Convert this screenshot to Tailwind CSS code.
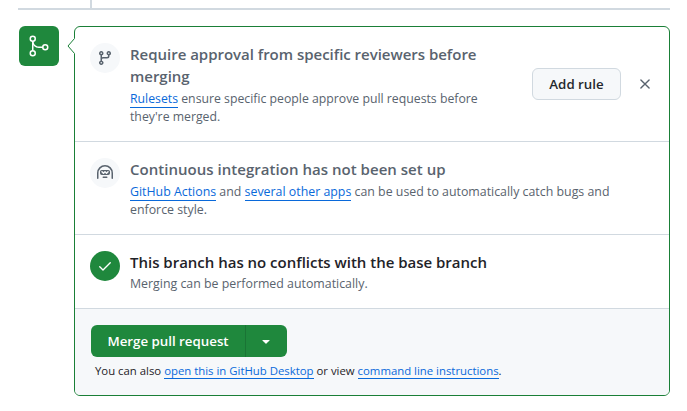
<!DOCTYPE html>
<html lang="en">
<head>
<meta charset="utf-8">
<title>Merge pull request</title>
<script src="https://cdn.jsdelivr.net/npm/@tailwindcss/browser@4"></script>
</head>
<body class="bg-white font-['Open_Sans','Noto_Sans',sans-serif] text-[#59636e]">
<main class="flex h-[411px] w-[687px] flex-col overflow-hidden">
  <div class="ml-[90px] h-2 w-0.5 bg-[#d1d9e0]"></div>
  <div class="ml-[18px] h-0.5 w-[652px] bg-[#d1d9e0]"></div>
  <div class="mt-4 ml-[19px] flex gap-[15px]">
    <div class="flex size-10 items-center justify-center rounded-md bg-[#1f883d] text-white">
      <svg class="size-6" viewBox="0 0 24 24" fill="currentColor"><path d="M15 13.25a3.25 3.25 0 1 1 6.5 0 3.25 3.25 0 0 1-6.5 0Zm-12.5 6a3.25 3.25 0 1 1 6.5 0 3.25 3.25 0 0 1-6.5 0Zm0-14.5a3.25 3.25 0 1 1 6.5 0 3.25 3.25 0 0 1-6.5 0ZM5.75 6.5a1.75 1.75 0 1 0-.001-3.501A1.75 1.75 0 0 0 5.75 6.5Zm0 14.5a1.75 1.75 0 1 0-.001-3.501A1.75 1.75 0 0 0 5.75 21Zm12.5-6a1.75 1.75 0 1 0-.001-3.501A1.75 1.75 0 0 0 18.25 15Z"/><path d="M6.5 7.25c0 2.9 2.35 5.25 5.25 5.25h4.5V14h-4.5A6.75 6.75 0 0 1 5 7.25Z"/><path d="M5.75 16.75A.75.75 0 0 1 5 16V8a.75.75 0 0 1 1.5 0v8a.75.75 0 0 1-.75.75Z"/></svg>
    </div>
    <section class="relative h-[370px] w-[596px] rounded-md border border-[#1a7f37] bg-white">
      <svg class="absolute top-[11px] -left-2 h-4 w-2" viewBox="0 0 8 16"><path d="M8 0 0 8l8 8Z" fill="#fff"/><path d="M7.5.5 1 8l6.500 7.500" fill="none" stroke="#1a7f37"/></svg>
      <div class="flex h-[115px] border-b border-[#d1d9e0] pt-4 pl-[15px]">
        <div class="flex size-[30px] items-center justify-center rounded-full bg-[#f6f8fa]">
          <svg class="size-4" viewBox="0 0 16 16" fill="currentColor"><path d="M9.5 3.25a2.25 2.25 0 1 1 3 2.122V6A2.5 2.5 0 0 1 10 8.500H6a1 1 0 0 0-1 1v1.128a2.251 2.251 0 1 1-1.5 0V5.372a2.25 2.25 0 1 1 1.5 0v1.836A2.493 2.493 0 0 1 6 7h4a1 1 0 0 0 1-1v-.628A2.25 2.25 0 0 1 9.500 3.250Zm-6 0a.75.75 0 1 0 1.500 0 .75.75 0 0 0-1.500 0Zm8.250-.75a.75.75 0 1 0 0 1.500.75.75 0 0 0 0-1.500ZM4.250 12a.75.75 0 1 0 0 1.500.75.75 0 0 0 0-1.500Z"/></svg>
        </div>
        <div class="ml-2.5 w-[402px] whitespace-nowrap">
          <h3 class="text-[15px] leading-[22px] font-semibold -tracking-[0.02px]">Require approval from specific reviewers before<br>merging</h3>
          <p class="mt-[3px] text-[12.27px] leading-[18px]"><a class="border-b border-[#0969da] text-[#0969da]">Rulesets</a> ensure specific people approve pull requests before<br>they're merged.</p>
        </div>
        <button class="mt-[25px] h-8 w-[89px] rounded-md border border-[#d1d9e0] bg-[#f6f8fa] pt-px text-[13.3px] font-semibold text-[#25292e]">Add rule</button>
        <svg class="mt-[33px] ml-4 size-4" viewBox="0 0 16 16" fill="none" stroke="currentColor" stroke-width="1.400" stroke-linecap="round"><path d="m3.900 3.900 8.200 8.200m0-8.200-8.200 8.200"/></svg>
      </div>
      <div class="flex h-[93px] border-b border-[#d1d9e0] pt-4 pl-[15px]">
        <div class="flex size-[30px] items-center justify-center rounded-full bg-[#f6f8fa]">
          <svg class="size-4" viewBox="0 0 16 16" fill="currentColor"><path fill-rule="evenodd" d="M0 8a8 8 0 1 1 16 0v5.25a.75.75 0 0 1-1.5 0V8a6.5 6.5 0 1 0-13 0v5.25a.75.75 0 0 1-1.5 0V8Zm5.5 4.25a.75.75 0 0 1 .75-.75h3.5a.75.75 0 0 1 0 1.5h-3.5a.75.75 0 0 1-.75-.75ZM3 6.75C3 5.784 3.784 5 4.75 5h6.5c.966 0 1.75.784 1.75 1.75v1.5A1.75 1.75 0 0 1 11.25 10h-6.5A1.75 1.75 0 0 1 3 8.25Zm1.47-.53a.75.75 0 0 1 1.06 0l.97.97.97-.97a.748.748 0 0 1 1.06 0l.97.97.97-.97a.749.749 0 0 1 1.06 1.06l-1.5 1.5a.75.75 0 0 1-1.06 0L8 7.81l-.97.97a.75.75 0 0 1-1.06 0l-1.5-1.5a.75.75 0 0 1 0-1.06Z"/></svg>
        </div>
        <div class="ml-2.5 whitespace-nowrap">
          <h3 class="text-[15px] leading-[22px] font-semibold tracking-[0.03px]">Continuous integration has not been set up</h3>
          <p class="mt-[3px] text-[12.37px] leading-[18px]"><a class="border-b border-[#0969da] text-[#0969da]">GitHub Actions</a> and <a class="border-b border-[#0969da] text-[#0969da]">several other apps</a> can be used to automatically catch bugs and<br>enforce style.</p>
        </div>
      </div>
      <div class="flex h-[74px] border-b border-[#d1d9e0] pt-4 pl-[15px]">
        <div class="flex size-[30px] items-center justify-center rounded-full bg-[#1f883d] text-white">
          <svg class="size-4" viewBox="0 0 16 16" fill="none" stroke="currentColor" stroke-width="1.400" stroke-linecap="round" stroke-linejoin="round"><path d="M2.750 8.750 6 12l7.250-7.250"/></svg>
        </div>
        <div class="ml-2.5 whitespace-nowrap">
          <h3 class="text-[15px] leading-[22px] font-semibold text-[#1f2328] -tracking-[0.01px]">This branch has no conflicts with the base branch</h3>
          <p class="mt-0.5 text-[12.37px] leading-[18px]">Merging can be performed automatically.</p>
        </div>
      </div>
      <div class="h-[86px] rounded-b-[5px] bg-[#f6f8fa] pt-4 pl-4 whitespace-nowrap">
        <div class="flex h-8 w-[196px] overflow-hidden rounded-md bg-[#1f883d] text-white">
          <button class="h-8 w-[155px] border-r border-[#1a7435] pt-px text-[13.3px] font-semibold">Merge pull request</button>
          <button class="flex h-8 flex-1 items-center justify-center pr-0.5"><svg class="size-4" viewBox="0 0 16 16" fill="currentColor"><path d="m4.427 7.427 3.396 3.396a.25.25 0 0 0 .354 0l3.396-3.396A.25.25 0 0 0 11.396 7H4.604a.25.25 0 0 0-.177.427Z"/></svg></button>
        </div>
        <p class="mt-[5px] ml-1 text-[11.37px] leading-[18px] text-[#1f2328]">You can also <a class="border-b border-[#0969da] text-[#0969da]">open this in GitHub Desktop</a> or view <a class="border-b border-[#0969da] text-[#0969da]">command line instructions</a>.</p>
      </div>
    </section>
  </div>
</main>
</body>
</html>
